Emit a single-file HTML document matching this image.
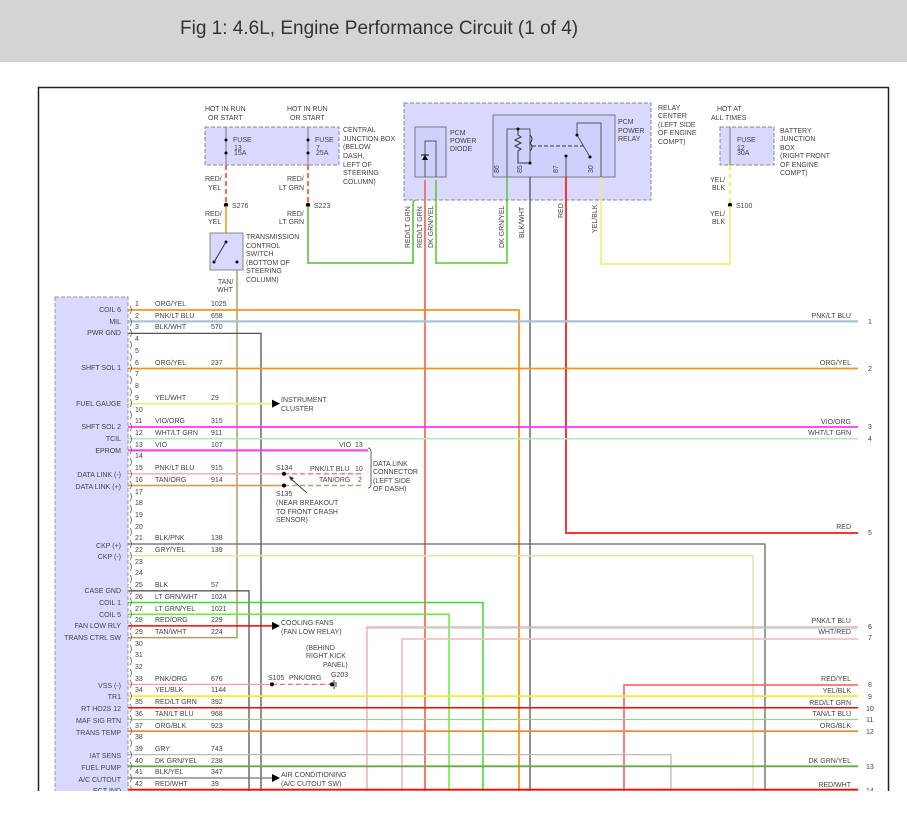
<!DOCTYPE html>
<html><head><meta charset="utf-8"><style>
html,body{margin:0;padding:0;background:#fff;width:907px;height:813px;overflow:hidden}
svg{display:block}
text{font-family:"Liberation Sans",Arial,sans-serif;font-size:7px;fill:#444}
.r{text-anchor:end}
</style></head><body>
<svg width="907" height="813" viewBox="0 0 907 813" xmlns="http://www.w3.org/2000/svg">
<rect x="0" y="0" width="907" height="62" fill="#d4d4d4"/>
<text x="180" y="34" style="font-size:19px;fill:#333">Fig 1: 4.6L, Engine Performance Circuit (1 of 4)</text>
<defs><clipPath id="c"><rect x="0" y="0" width="907" height="791"/></clipPath></defs>
<g clip-path="url(#c)">
<rect x="38.5" y="87.5" width="850" height="720" fill="none" stroke="#222" stroke-width="1.5"/>

<!-- Central junction box -->
<rect x="205" y="127" width="134" height="38" fill="#d9d9ff" stroke="#888" stroke-dasharray="4,2"/>
<text x="205" y="111">HOT IN RUN</text><text x="208" y="120">OR START</text>
<text x="287" y="111">HOT IN RUN</text><text x="290" y="120">OR START</text>
<line x1="226" y1="127" x2="226" y2="165" stroke="#888" stroke-width="1.2"/>
<line x1="308" y1="127" x2="308" y2="165" stroke="#888" stroke-width="1.2"/>
<circle cx="226" cy="140" r="1.5" fill="#000"/><circle cx="226" cy="153" r="1.5" fill="#000"/>
<circle cx="308" cy="140" r="1.5" fill="#000"/><circle cx="308" cy="153" r="1.5" fill="#000"/>
<text x="233" y="142">FUSE</text><text x="234" y="150">13</text><text x="234" y="155">15A</text>
<text x="315" y="142">FUSE</text><text x="316" y="150">7</text><text x="316" y="155">25A</text>
<text x="343" y="132">CENTRAL</text><text x="343" y="141">JUNCTION BOX</text><text x="343" y="149">(BELOW</text><text x="343" y="158">DASH,</text><text x="343" y="167">LEFT OF</text><text x="343" y="175">STEERING</text><text x="343" y="184">COLUMN)</text>
<line x1="226" y1="165" x2="226" y2="205" stroke="#f33" stroke-width="1.5" stroke-dasharray="5,3"/>
<line x1="308" y1="165" x2="308" y2="205" stroke="#f33" stroke-width="1.5" stroke-dasharray="5,3"/>
<text x="205" y="181">RED/</text><text x="208" y="190">YEL</text>
<text x="287" y="181">RED/</text><text x="279" y="190">LT GRN</text>
<circle cx="226" cy="205" r="2.2" fill="#000"/><text x="232" y="208">S276</text>
<circle cx="308" cy="205" r="2.2" fill="#000"/><text x="314" y="208">S223</text>
<text x="205" y="216">RED/</text><text x="208" y="224">YEL</text>
<text x="287" y="216">RED/</text><text x="279" y="224">LT GRN</text>
<line x1="226" y1="206" x2="226" y2="233" stroke="#f90" stroke-width="1.5"/>
<!-- switch -->
<rect x="210" y="233" width="33" height="37" fill="#d9d9ff" stroke="#888"/>
<circle cx="226" cy="242" r="1.5" fill="#000"/><circle cx="214" cy="262" r="1.5" fill="#000"/><circle cx="237" cy="262" r="1.5" fill="#000"/>
<line x1="226" y1="242" x2="214" y2="262" stroke="#333"/>
<text x="246" y="239">TRANSMISSION</text><text x="246" y="248">CONTROL</text><text x="246" y="256">SWITCH</text><text x="246" y="265">(BOTTOM OF</text><text x="246" y="273">STEERING</text><text x="246" y="282">COLUMN)</text>
<text x="218" y="284">TAN/</text><text x="217" y="292">WHT</text>
<polyline points="237,270 237,637.6 128,637.6" fill="none" stroke="#b59a6a" stroke-width="1.5"/>
<!-- green wire -->
<polyline points="308,206 308,263 413,263 413,203 425,182" fill="none" stroke="#5b3" stroke-width="1.5"/>

<!-- Relay center -->
<rect x="404" y="103" width="247" height="97" fill="#d9d9ff" stroke="#888" stroke-dasharray="4,2"/>
<rect x="415" y="127" width="31" height="50" fill="#d0d0ff" stroke="#777"/>
<polyline points="425,177 425,141 436,141 436,177" fill="none" stroke="#555"/>
<polygon points="422,160 428,160 425,155" fill="#000"/><line x1="421" y1="155" x2="429" y2="155" stroke="#000"/>
<text x="450" y="135">PCM</text><text x="450" y="143">POWER</text><text x="450" y="151">DIODE</text>
<rect x="493" y="115" width="122" height="62" fill="#d0d0ff" stroke="#777"/>
<polyline points="507,177 507,129 530,129 530,163" fill="none" stroke="#555"/>
<path d="M518,129 V135 l3,2 -6,3 6,3 -6,3 6,3 -3,2 V163 H530" fill="none" stroke="#333"/>
<path d="M530,135 q4,4 0,8 q4,4 0,8" fill="none" stroke="#333"/>
<line x1="532" y1="146" x2="585" y2="146" stroke="#333" stroke-dasharray="4,2"/>
<polyline points="601,177 601,123 577,123 577,135 590,157" fill="none" stroke="#555"/>
<circle cx="577" cy="135" r="1.5" fill="#000"/><circle cx="590" cy="157" r="1.5" fill="#000"/>
<line x1="566" y1="156" x2="566" y2="177" stroke="#555"/><circle cx="566" cy="156" r="1.5" fill="#000"/>
<circle cx="518" cy="129" r="1.5" fill="#000"/><circle cx="530" cy="163" r="1.5" fill="#000"/>
<text x="618" y="124">PCM</text><text x="618" y="133">POWER</text><text x="618" y="141">RELAY</text>
<text transform="translate(499,173) rotate(-90)">86</text><text transform="translate(522,173) rotate(-90)">85</text>
<text transform="translate(558,173) rotate(-90)">87</text><text transform="translate(593,173) rotate(-90)">30</text>
<text x="658" y="110">RELAY</text><text x="658" y="118">CENTER</text><text x="658" y="127">(LEFT SIDE</text><text x="658" y="135">OF ENGINE</text><text x="658" y="144">COMPT)</text>
<!-- battery box -->
<text x="717" y="111">HOT AT</text><text x="711" y="120">ALL TIMES</text>
<rect x="720" y="127" width="54" height="38" fill="#d9d9ff" stroke="#888" stroke-dasharray="4,2"/>
<line x1="730" y1="127" x2="730" y2="165" stroke="#888" stroke-width="1.2"/>
<text x="737" y="142">FUSE</text><text x="737" y="150">12</text><text x="737" y="155">30A</text>
<text x="780" y="133">BATTERY</text><text x="780" y="141">JUNCTION</text><text x="780" y="150">BOX</text><text x="780" y="158">(RIGHT FRONT</text><text x="780" y="167">OF ENGINE</text><text x="780" y="175">COMPT)</text>
<line x1="730" y1="165" x2="730" y2="205" stroke="#ee3" stroke-width="1.5" stroke-dasharray="5,3"/>
<text x="710" y="182">YEL/</text><text x="712" y="190">BLK</text>
<circle cx="730" cy="205" r="2.2" fill="#000"/><text x="736" y="208">S100</text>
<text x="710" y="216">YEL/</text><text x="712" y="224">BLK</text>
<polyline points="730,206 730,264 601,264 601,177" fill="none" stroke="#ee6" stroke-width="1.5"/>
<polyline points="436,180 436,263 507,263 507,177" fill="none" stroke="#5c2" stroke-width="1.5"/>
<text transform="translate(410,248) rotate(-90)">RED/LT GRN</text>
<text transform="translate(422,248) rotate(-90)">RED/LT GRN</text>
<text transform="translate(433,248) rotate(-90)">DK GRN/YEL</text>
<text transform="translate(504,248) rotate(-90)">DK GRN/YEL</text>
<text transform="translate(524,238) rotate(-90)">BLK/WHT</text>
<text transform="translate(563,218) rotate(-90)">RED</text>
<text transform="translate(597,233) rotate(-90)">YEL/BLK</text>

<!-- verticals -->
<line x1="425" y1="180" x2="425" y2="800" stroke="#f07060" stroke-width="1.8"/>
<line x1="530" y1="177" x2="530" y2="800" stroke="#555" stroke-width="1.3"/>
<polyline points="566,177 566,533 858,533" fill="none" stroke="#f33" stroke-width="2"/>
<polyline points="128,310 519,310 519,800" fill="none" stroke="#f7941d" stroke-width="1.8"/>
<line x1="128" y1="321.7" x2="858" y2="321.7" stroke="#7fd3e6" stroke-width="1.5"/>
<line x1="128" y1="320.5" x2="858" y2="320.5" stroke="#f4a6b8" stroke-width="0.8"/>
<polyline points="128,333.4 261,333.4 261,800" fill="none" stroke="#555" stroke-width="1.3"/>
<line x1="128" y1="368.5" x2="858" y2="368.5" stroke="#f7941d" stroke-width="1.8"/>
<line x1="128" y1="403.6" x2="272" y2="403.6" stroke="#eeee88" stroke-width="1.8"/>
<polygon points="272,399.6 280,403.6 272,407.6" fill="#000"/>
<text x="281" y="402">INSTRUMENT</text><text x="281" y="411">CLUSTER</text>
<line x1="128" y1="427" x2="858" y2="427" stroke="#f3f" stroke-width="1.8"/>
<line x1="128" y1="438.7" x2="858" y2="438.7" stroke="#b8e6b8" stroke-width="1.5"/>
<line x1="128" y1="450.4" x2="368" y2="450.4" stroke="#f3f" stroke-width="2"/>
<line x1="128" y1="473.8" x2="284" y2="473.8" stroke="#f4a6b8" stroke-width="1.3"/>
<line x1="284" y1="473.8" x2="364" y2="473.8" stroke="#f6a" stroke-width="1.3" stroke-dasharray="5,3"/>
<line x1="128" y1="485.5" x2="284" y2="485.5" stroke="#d4a060" stroke-width="1.8"/>
<line x1="284" y1="485.5" x2="364" y2="485.5" stroke="#b8a070" stroke-width="1.5" stroke-dasharray="5,3"/>
<circle cx="284" cy="473.8" r="2" fill="#000"/><circle cx="284" cy="485.5" r="2" fill="#000"/>
<line x1="290" y1="478" x2="307" y2="493" stroke="#444"/><polygon points="289,476 294,478 291,481" fill="#333"/>
<text x="276" y="470">S134</text><text x="276" y="496">S135</text>
<text x="276" y="505">(NEAR BREAKOUT</text><text x="276" y="514">TO FRONT CRASH</text><text x="276" y="522">SENSOR)</text>
<text x="339" y="447">VIO</text><text x="355" y="447">13</text>
<text x="310" y="471">PNK/LT BLU</text><text x="355" y="471">10</text>
<text x="319" y="482">TAN/ORG</text><text x="358" y="482">2</text>
<path d="M368,448 q3,0 3,4 v32 q0,4 -3,4" fill="none" stroke="#666"/>
<text x="373" y="466">DATA LINK</text><text x="373" y="474">CONNECTOR</text><text x="373" y="483">(LEFT SIDE</text><text x="373" y="491">OF DASH)</text>
<polyline points="128,544 765,544 765,800" fill="none" stroke="#666" stroke-width="1.3"/>
<polyline points="128,555.7 753,555.7 753,800" fill="none" stroke="#e8e2a8" stroke-width="1.5"/>
<polyline points="128,590.8 249,590.8 249,800" fill="none" stroke="#555" stroke-width="1.3"/>
<polyline points="128,602.5 483,602.5 483,800" fill="none" stroke="#3d3" stroke-width="1.5"/>
<polyline points="128,614.2 449,614.2 449,800" fill="none" stroke="#6e3" stroke-width="1.5"/>
<line x1="128" y1="625.9" x2="272" y2="625.9" stroke="#f00" stroke-width="1.5"/>
<polygon points="272,621.9 280,625.9 272,629.9" fill="#000"/>
<text x="281" y="625">COOLING FANS</text><text x="281" y="634">(FAN LOW RELAY)</text>
<polyline points="367,800 367,627 858,627" fill="none" stroke="#f4a0a8" stroke-width="1.3"/>
<line x1="367" y1="628.2" x2="858" y2="628.2" stroke="#9dd" stroke-width="0.8"/>
<polyline points="402,800 402,639 858,639" fill="none" stroke="#f5c0c0" stroke-width="1.8"/>
<text x="306" y="650">(BEHIND</text><text x="306" y="658">RIGHT KICK</text><text x="323" y="667">PANEL)</text>
<line x1="128" y1="684.4" x2="272" y2="684.4" stroke="#f4a0a8" stroke-width="1.3"/>
<line x1="272" y1="684.4" x2="330" y2="684.4" stroke="#f6a" stroke-width="1.3" stroke-dasharray="5,3"/>
<circle cx="272" cy="684.4" r="2" fill="#000"/><circle cx="332" cy="684.4" r="2" fill="#000"/>
<line x1="334" y1="680" x2="334" y2="689" stroke="#333"/><line x1="336" y1="682" x2="336" y2="687" stroke="#333"/>
<text x="268" y="680">S105</text><text x="289" y="680">PNK/ORG</text><text x="331" y="677">G203</text>
<polyline points="624,800 624,685 858,685" fill="none" stroke="#f55" stroke-width="1.5"/>
<line x1="128" y1="696.1" x2="858" y2="696.1" stroke="#ee3" stroke-width="1.8"/>
<line x1="128" y1="707.8" x2="858" y2="707.8" stroke="#f00" stroke-width="1.5"/>
<line x1="128" y1="719.5" x2="858" y2="719.5" stroke="#9c9" stroke-width="1.3"/>
<line x1="128" y1="731.2" x2="858" y2="731.2" stroke="#e39040" stroke-width="1.8"/>
<polyline points="128,754.6 671,754.6 671,800" fill="none" stroke="#bbb" stroke-width="1.3"/>
<line x1="128" y1="766.3" x2="858" y2="766.3" stroke="#6a4" stroke-width="1.8"/>
<line x1="128" y1="778" x2="272" y2="778" stroke="#777" stroke-width="1.3"/>
<polygon points="272,774 280,778 272,782" fill="#000"/>
<text x="281" y="777">AIR CONDITIONING</text><text x="281" y="786">(A/C CUTOUT SW)</text>
<line x1="128" y1="789.7" x2="858" y2="789.7" stroke="#f00" stroke-width="1.8"/>

<!-- right labels -->
<g class="r">
<text class="r" x="851" y="318">PNK/LT BLU</text>
<text class="r" x="851" y="365">ORG/YEL</text>
<text class="r" x="851" y="424">VIO/ORG</text>
<text class="r" x="851" y="435">WHT/LT GRN</text>
<text class="r" x="851" y="529">RED</text>
<text class="r" x="851" y="623">PNK/LT BLU</text>
<text class="r" x="851" y="634">WHT/RED</text>
<text class="r" x="851" y="681">RED/YEL</text>
<text class="r" x="851" y="693">YEL/BLK</text>
<text class="r" x="851" y="705">RED/LT GRN</text>
<text class="r" x="851" y="716">TAN/LT BLU</text>
<text class="r" x="851" y="728">ORG/BLK</text>
<text class="r" x="851" y="763">DK GRN/YEL</text>
<text class="r" x="851" y="787">RED/WHT</text>
</g>
<text x="868" y="324">1</text><text x="868" y="371">2</text><text x="868" y="429">3</text><text x="868" y="441">4</text><text x="868" y="535">5</text>
<text x="868" y="629">6</text><text x="868" y="640">7</text><text x="868" y="687">8</text><text x="868" y="699">9</text><text x="866" y="711">10</text>
<text x="866" y="722">11</text><text x="866" y="734">12</text><text x="866" y="769">13</text><text x="866" y="793">14</text>

<!-- PCM connector -->
<rect x="55" y="297" width="73" height="520" fill="#d9d9ff" stroke="#999" stroke-dasharray="4,2"/>
<g font-size="7">
<text class="r" x="121" y="312">COIL 6</text>
<text class="r" x="121" y="324">MIL</text>
<text class="r" x="121" y="335">PWR GND</text>
<text class="r" x="121" y="370">SHFT SOL 1</text>
<text class="r" x="121" y="406">FUEL GAUGE</text>
<text class="r" x="121" y="429">SHFT SOL 2</text>
<text class="r" x="121" y="441">TCIL</text>
<text class="r" x="121" y="453">EPROM</text>
<text class="r" x="121" y="477">DATA LINK (-)</text>
<text class="r" x="121" y="489">DATA LINK (+)</text>
<text class="r" x="121" y="548">CKP (+)</text>
<text class="r" x="121" y="559">CKP (-)</text>
<text class="r" x="121" y="593">CASE GND</text>
<text class="r" x="121" y="605">COIL 1</text>
<text class="r" x="121" y="617">COIL 5</text>
<text class="r" x="121" y="628">FAN LOW RLY</text>
<text class="r" x="121" y="640">TRANS CTRL SW</text>
<text class="r" x="121" y="688">VSS (-)</text>
<text class="r" x="121" y="699">TR1</text>
<text class="r" x="121" y="711">RT HO2S 12</text>
<text class="r" x="121" y="723">MAF SIG RTN</text>
<text class="r" x="121" y="735">TRANS TEMP</text>
<text class="r" x="121" y="758">IAT SENS</text>
<text class="r" x="121" y="770">FUEL PUMP</text>
<text class="r" x="121" y="782">A/C CUTOUT</text>
<text class="r" x="121" y="793">ECT IND</text>
</g>
<!-- pin brackets -->
<g fill="none" stroke="#666" stroke-width="0.8">
<path d="M130,306 q3,4 0,8 M130,318 q3,4 0,8 M130,329 q3,4 0,8 M130,341 q3,4 0,8 M130,353 q3,4 0,8 M130,364 q3,4 0,8 M130,376 q3,4 0,8 M130,388 q3,4 0,8 M130,399 q3,4 0,8 M130,411 q3,4 0,8 M130,423 q3,4 0,8 M130,435 q3,4 0,8 M130,446 q3,4 0,8 M130,458 q3,4 0,8 M130,470 q3,4 0,8 M130,481 q3,4 0,8 M130,493 q3,4 0,8 M130,505 q3,4 0,8 M130,516 q3,4 0,8 M130,528 q3,4 0,8 M130,540 q3,4 0,8 M130,552 q3,4 0,8 M130,563 q3,4 0,8 M130,575 q3,4 0,8 M130,587 q3,4 0,8 M130,598 q3,4 0,8 M130,610 q3,4 0,8 M130,622 q3,4 0,8 M130,633 q3,4 0,8 M130,645 q3,4 0,8 M130,657 q3,4 0,8 M130,669 q3,4 0,8 M130,680 q3,4 0,8 M130,692 q3,4 0,8 M130,704 q3,4 0,8 M130,715 q3,4 0,8 M130,727 q3,4 0,8 M130,739 q3,4 0,8 M130,751 q3,4 0,8 M130,762 q3,4 0,8 M130,774 q3,4 0,8 M130,786 q3,4 0,8"/>
</g>
<!-- pin numbers / colors / circuits -->
<text x="135" y="306">1</text><text x="155" y="306">ORG/YEL</text><text x="211" y="306">1025</text>
<text x="135" y="318">2</text><text x="155" y="318">PNK/LT BLU</text><text x="211" y="318">658</text>
<text x="135" y="329">3</text><text x="155" y="329">BLK/WHT</text><text x="211" y="329">570</text>
<text x="135" y="341">4</text>
<text x="135" y="353">5</text>
<text x="135" y="365">6</text><text x="155" y="365">ORG/YEL</text><text x="211" y="365">237</text>
<text x="135" y="376">7</text>
<text x="135" y="388">8</text>
<text x="135" y="400">9</text><text x="155" y="400">YEL/WHT</text><text x="211" y="400">29</text>
<text x="135" y="412">10</text>
<text x="135" y="423">11</text><text x="155" y="423">VIO/ORG</text><text x="211" y="423">315</text>
<text x="135" y="435">12</text><text x="155" y="435">WHT/LT GRN</text><text x="211" y="435">911</text>
<text x="135" y="447">13</text><text x="155" y="447">VIO</text><text x="211" y="447">107</text>
<text x="135" y="458">14</text>
<text x="135" y="470">15</text><text x="155" y="470">PNK/LT BLU</text><text x="211" y="470">915</text>
<text x="135" y="482">16</text><text x="155" y="482">TAN/ORG</text><text x="211" y="482">914</text>
<text x="135" y="494">17</text>
<text x="135" y="505">18</text>
<text x="135" y="517">19</text>
<text x="135" y="529">20</text>
<text x="135" y="540">21</text><text x="155" y="540">BLK/PNK</text><text x="211" y="540">138</text>
<text x="135" y="552">22</text><text x="155" y="552">GRY/YEL</text><text x="211" y="552">139</text>
<text x="135" y="564">23</text>
<text x="135" y="575">24</text>
<text x="135" y="587">25</text><text x="155" y="587">BLK</text><text x="211" y="587">57</text>
<text x="135" y="599">26</text><text x="155" y="599">LT GRN/WHT</text><text x="211" y="599">1024</text>
<text x="135" y="611">27</text><text x="155" y="611">LT GRN/YEL</text><text x="211" y="611">1021</text>
<text x="135" y="622">28</text><text x="155" y="622">RED/ORG</text><text x="211" y="622">229</text>
<text x="135" y="634">29</text><text x="155" y="634">TAN/WHT</text><text x="211" y="634">224</text>
<text x="135" y="646">30</text>
<text x="135" y="657">31</text>
<text x="135" y="669">32</text>
<text x="135" y="681">33</text><text x="155" y="681">PNK/ORG</text><text x="211" y="681">676</text>
<text x="135" y="692">34</text><text x="155" y="692">YEL/BLK</text><text x="211" y="692">1144</text>
<text x="135" y="704">35</text><text x="155" y="704">RED/LT GRN</text><text x="211" y="704">392</text>
<text x="135" y="716">36</text><text x="155" y="716">TAN/LT BLU</text><text x="211" y="716">968</text>
<text x="135" y="728">37</text><text x="155" y="728">ORG/BLK</text><text x="211" y="728">923</text>
<text x="135" y="739">38</text>
<text x="135" y="751">39</text><text x="155" y="751">GRY</text><text x="211" y="751">743</text>
<text x="135" y="763">40</text><text x="155" y="763">DK GRN/YEL</text><text x="211" y="763">238</text>
<text x="135" y="774">41</text><text x="155" y="774">BLK/YEL</text><text x="211" y="774">347</text>
<text x="135" y="786">42</text><text x="155" y="786">RED/WHT</text><text x="211" y="786">39</text>
</g>
</svg>
</body></html>
